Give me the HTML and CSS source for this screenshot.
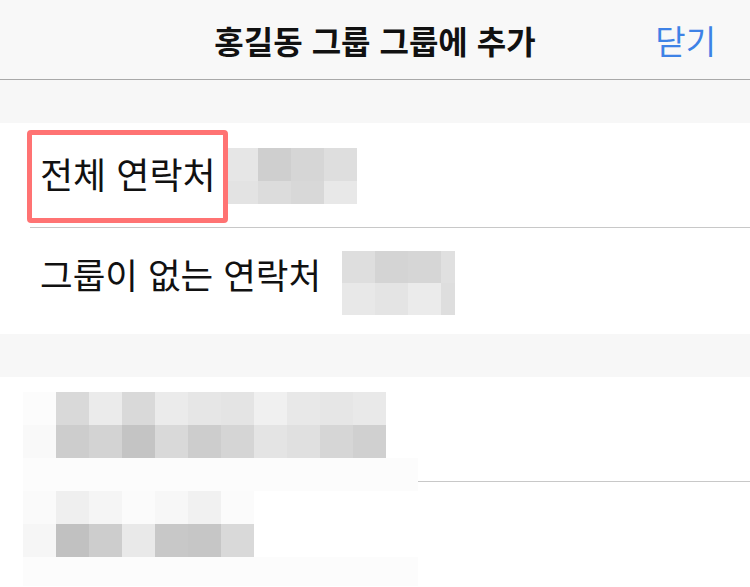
FILE: index.html
```html
<!DOCTYPE html>
<html lang="ko">
<head>
  <meta charset="UTF-8">
  <meta name="viewport" content="width=device-width, initial-scale=1.0">
  <title>그룹에 추가</title>
  <link rel="stylesheet" href="styles.css">
</head>
<body>
  <header class="nav-bar">
    <span></span>
    <h1 class="nav-title">홍길동 그룹 그룹에 추가</h1>
    <button class="nav-close">닫기</button>
  </header>

  <div class="spacer"></div>

  <ul class="group-list">
    <li class="group-row">
      <span class="group-name highlighted">전체 연락처</span>
      <div class="mosaic mosaic-a">
        <i style="background:#e6e6e6"></i><i style="background:#cfcfcf"></i><i style="background:#d6d6d6"></i><i style="background:#dedede"></i>
        <i style="background:#e3e3e3"></i><i style="background:#dcdcdc"></i><i style="background:#d8d8d8"></i><i style="background:#e8e8e8"></i>
      </div>
    </li>
    <li class="group-row">
      <span class="group-name">그룹이 없는 연락처</span>
      <div class="mosaic mosaic-b">
        <i style="background:#dedede"></i><i style="background:#d4d4d4"></i><i style="background:#d6d6d6"></i><i style="background:#e0e0e0"></i>
        <i style="background:#e8e8e8"></i><i style="background:#e4e4e4"></i><i style="background:#ebebeb"></i><i style="background:#dedede"></i>
      </div>
    </li>
  </ul>

  <div class="spacer"></div>

  <section class="other-groups">
    <div class="mosaic mosaic-c">
      <i style="background:#fcfcfc"></i><i style="background:#d9d9d9"></i><i style="background:#ebebeb"></i><i style="background:#d9d9d9"></i><i style="background:#ebebeb"></i><i style="background:#e6e6e6"></i><i style="background:#e4e4e4"></i><i style="background:#f0f0f0"></i><i style="background:#e8e8e8"></i><i style="background:#e6e6e6"></i><i style="background:#e9e9e9"></i><i></i>
      <i style="background:#f9f9f9"></i><i style="background:#cdcdcd"></i><i style="background:#d3d3d3"></i><i style="background:#c4c4c4"></i><i style="background:#d9d9d9"></i><i style="background:#cdcdcd"></i><i style="background:#d5d5d5"></i><i style="background:#e4e4e4"></i><i style="background:#e0e0e0"></i><i style="background:#d6d6d6"></i><i style="background:#d0d0d0"></i><i></i>
      <i class="faint-row"></i>
      <i style="background:#fafafa"></i><i style="background:#efefef"></i><i style="background:#f5f5f5"></i><i style="background:#fbfbfb"></i><i style="background:#f7f7f7"></i><i style="background:#f1f1f1"></i><i style="background:#fbfbfb"></i><i></i><i></i><i></i><i></i><i></i>
      <i style="background:#f6f6f6"></i><i style="background:#c1c1c1"></i><i style="background:#cdcdcd"></i><i style="background:#e9e9e9"></i><i style="background:#c8c8c8"></i><i style="background:#c6c6c6"></i><i style="background:#d9d9d9"></i><i></i><i></i><i></i><i></i><i></i>
      <i class="faint-row"></i>
    </div>
    <div class="other-rest">
      <div class="row-divider"></div>
    </div>
  </section>
</body>
</html>
```

FILE: styles.css
```css
body {
  margin: 0;
  background-color: #ffffff;
  font-family: "Noto Sans CJK KR", "Noto Sans", sans-serif;
  color: #111111;
  overflow: hidden;
}
.nav-bar {
  height: 79px;
  display: grid;
  grid-template-columns: 1fr auto 1fr;
  align-items: center;
  background-color: #f8f8f8;
  border-bottom: 1px solid #a9a9a9;
}
.nav-title {
  margin: 0;
  font-size: 32px;
  font-weight: 700;
}
.nav-close {
  justify-self: end;
  margin-right: 34px;
  padding: 0;
  background: none;
  border: none;
  font-family: inherit;
  font-size: 33px;
  color: #3e82e6;
  cursor: pointer;
}
.spacer {
  height: 43px;
  background-color: #f7f7f7;
}
.group-list {
  list-style-type: none;
  margin: 0;
  padding: 0;
}
.group-row {
  display: flex;
  align-items: center;
  height: 104px;
  margin-left: 30px;
  border-bottom: 1px solid #c8c8c8;
}
.group-row:last-child {
  height: 106px;
  align-items: flex-start;
  border-bottom: none;
}
.group-name {
  font-size: 35.5px;
  line-height: 1.2;
  margin-left: 10px;
}
.group-row:last-child .group-name {
  margin-top: 25px;
}
.highlighted {
  margin-left: -3px;
  margin-top: 3px;
  padding: 17px 7px 22px 8px;
  border: 5px solid #ff7373;
  border-radius: 4px;
  font-size: 36px;
}
.mosaic {
  display: grid;
  grid-auto-rows: 33px;
  align-self: flex-start;
}
.mosaic i {
  display: block;
}
.mosaic-a {
  grid-template-columns: repeat(4, 33px);
  grid-template-rows: 33px 23px;
  margin-left: -3px;
  margin-top: 25px;
  position: relative;
  z-index: -1;
}
.mosaic-b {
  grid-template-columns: 33px 33px 33px 14px;
  grid-template-rows: 32px 32px;
  margin-left: 21px;
  margin-top: 23px;
}
.other-groups {
  display: flex;
  align-items: flex-start;
  height: 209px;
}
.mosaic-c {
  grid-template-columns: repeat(11, 33px) 32px;
  margin-left: 23px;
  margin-top: 15px;
}
.mosaic-c .faint-row {
  grid-column: 1 / -1;
  background-color: #fcfcfc;
}
.other-rest {
  flex: 1;
}
.row-divider {
  margin-top: 104px;
  border-bottom: 1px solid #c8c8c8;
}
```
